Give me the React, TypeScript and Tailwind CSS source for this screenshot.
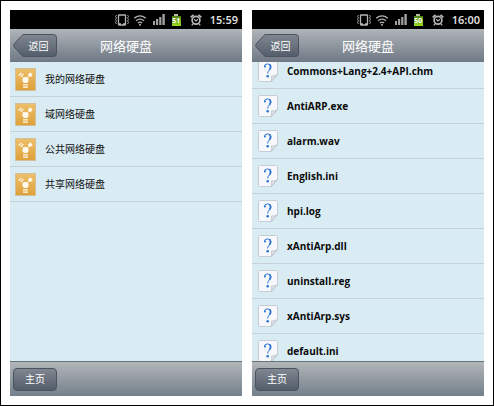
interface PhoneProps {
	readonly time: string
	readonly battery: string
	readonly children: React.ReactNode
}

const drives = ["我的网络硬盘", "域网络硬盘", "公共网络硬盘", "共享网络硬盘"]

const files = [
	"Commons+Lang+2.4+API.chm",
	"AntiARP.exe",
	"alarm.wav",
	"English.ini",
	"hpi.log",
	"xAntiArp.dll",
	"uninstall.reg",
	"xAntiArp.sys",
	"default.ini",
]

export default function App() {
	return (
		<main className="grid h-screen grid-cols-2 gap-[10px] border border-black bg-white p-[9px] font-['Noto_Sans','Noto_Sans_CJK_SC',sans-serif]">
			<Phone time="15:59" battery="51">
				<ul>
					{drives.map((name) => (
						<li
							key={name}
							className="flex h-[35px] items-center gap-[9px] border-b border-[#c5d0d8] pl-[5px] text-[10px] leading-4 text-[#111]"
						>
							<DriveIcon />
							{name}
						</li>
					))}
				</ul>
			</Phone>
			<Phone time="16:00" battery="50">
				<ul className="-mt-2">
					{files.map((name) => (
						<li
							key={name}
							className="flex h-[35px] items-center gap-[9px] border-b border-[#c5d0d8] pl-[6px] font-['Open_Sans',sans-serif] text-[10px] leading-4 font-bold text-[#0a0a0a]"
						>
							<FileIcon />
							{name}
						</li>
					))}
				</ul>
			</Phone>
		</main>
	)
}

function Phone({ time, battery, children }: PhoneProps) {
	return (
		<section className="flex min-h-0 min-w-0 flex-col bg-[#d9ecf4]">
			<StatusBar time={time} battery={battery} />
			<header className="grid h-[33px] shrink-0 grid-cols-[1fr_auto_1fr] items-center bg-linear-to-b from-[#b0b5b9] to-[#6f7985] px-[3px]">
				<BackButton />
				<h1 className="text-[13px] leading-5 text-white">网络硬盘</h1>
			</header>
			<div className="min-h-0 flex-1 overflow-hidden">{children}</div>
			<footer className="flex h-[35px] shrink-0 items-center border-t border-[#64727a] bg-linear-to-b from-[#b2b6b9] to-[#74808b] px-[3px]">
				<button
					type="button"
					className="h-[23px] w-11 rounded-[4px] border border-[#4a535e] bg-linear-to-b from-[#808791] to-[#535d6a] text-[10px] leading-4 text-white"
				>
					主页
				</button>
			</footer>
		</section>
	)
}

function BackButton() {
	return (
		<button
			type="button"
			className="relative h-[23px] w-11 pl-[7px] text-[10px] leading-4 text-white"
		>
			<svg viewBox="0 0 44 23" className="absolute inset-0 size-full" aria-hidden>
				<defs>
					<linearGradient id="back" x1="0" y1="0" x2="0" y2="1">
						<stop offset="0" stopColor="#808791" />
						<stop offset="1" stopColor="#535d6a" />
					</linearGradient>
				</defs>
				<path
					d="M11 .5H40.5a3 3 0 0 1 3 3v16a3 3 0 0 1-3 3H11q-1.500 0-2.500-1.400L1.200 13q-1-1.500 0-3L8.500 1.900Q9.500.5 11 .5Z"
					fill="url(#back)"
					stroke="#4a535e"
				/>
			</svg>
			<span className="relative">返回</span>
		</button>
	)
}

function StatusBar({ time, battery }: { readonly time: string; readonly battery: string }) {
	return (
		<div className="flex h-[19px] shrink-0 items-center justify-end bg-black pr-1 text-[#b5b5b5]">
			{/* vibrate */}
			<svg viewBox="0 0 16 14" className="mr-1 h-[14px] w-4" fill="none" stroke="currentColor" aria-hidden>
				<rect x="4.500" y="2" width="7" height="10" rx=".5" strokeWidth="1.300" />
				<path d="M5 11.200h2M9 11.200h2" strokeWidth="1.800" />
				<path d="M2.500 2l-1 1.500 1 1.500-1 1.500 1 1.500-1 1.500 1 1.500M13.500 2l1 1.500-1 1.500 1 1.500-1 1.500 1 1.500-1 1.500" strokeWidth=".9" />
			</svg>
			{/* wifi */}
			<svg viewBox="0 0 12 12" className="mr-[7px] size-3" fill="none" stroke="currentColor" strokeWidth="1.300" aria-hidden>
				<path d="M.3 4.200q5.700-4.800 11.400 0M2.100 6.700q3.900-3.200 7.800 0M3.900 9q2.100-1.700 4.200 0" />
				<circle cx="6" cy="10.700" r="1" fill="currentColor" stroke="none" />
			</svg>
			{/* signal */}
			<svg viewBox="0 0 12 11" className="mr-[7px] h-[11px] w-3" fill="#a2a2a2" aria-hidden>
				<path d="M0 7h2v4H0zM3 5h2.200v6H3zM6.200 3h2.200v8H6.200zM9.400 0h2.400v11H9.400z" />
			</svg>
			{/* battery */}
			<div className="mr-[9px] flex flex-col items-center">
				<div className="h-[2px] w-1 bg-[#b5c3a0]" />
				<div className="flex h-[10px] w-[9px] items-center justify-center bg-linear-to-b from-[#4d8110] to-[#9be01c] text-[7px] leading-[10px] font-bold text-white">
					{battery}
				</div>
			</div>
			{/* alarm */}
			<svg viewBox="0 0 12 12" className="mr-2 size-3" fill="none" stroke="currentColor" aria-hidden>
				<circle cx="6" cy="6.300" r="3.900" strokeWidth="1.700" />
				<path d="M.7 3.400L3.500.9M11.300 3.400L8.500.9" strokeWidth="1.800" />
				<path d="M4.200 5.200L6 6.900l2-1.700M3 9.800l-1.300 1.600M9 9.800l1.300 1.600" strokeWidth="1.200" />
			</svg>
			<span className="text-[11px] leading-4 font-semibold text-[#dedede]">{time}</span>
		</div>
	)
}

function DriveIcon() {
	return (
		<svg viewBox="0 0 21 23" className="h-[23px] w-[21px] shrink-0" aria-hidden>
			<defs>
				<linearGradient id="drive" x1="0" y1="0" x2="0" y2="1">
					<stop offset="0" stopColor="#edbf6b" />
					<stop offset="1" stopColor="#dea13a" />
				</linearGradient>
			</defs>
			<rect x=".5" y=".5" width="20" height="22" fill="url(#drive)" stroke="#d3c09a" />
			<g fill="#fffaf0">
				<circle cx="10.500" cy="12" r="3.100" />
				<path d="M15.200 4.300l2.500 2.500-2.400 2.500-2.500-2.300zM8 16.300h5v1.200H8zM8 18.500h5v1.200H8z" />
			</g>
			<path d="M10.500 12l4-4.500M10.500 12L7.500 8.800" fill="none" stroke="#fffaf0" strokeWidth=".9" />
			<path d="M3.700 7.600l2.700-2.800M5.700 8.800l2.700-2.800" fill="none" stroke="#fffaf0" strokeWidth="1.200" />
		</svg>
	)
}

function FileIcon() {
	return (
		<svg viewBox="0 0 20 22" className="h-[22px] w-5 shrink-0" aria-hidden>
			<path d="M1.500.5h17a1 1 0 0 1 1 1v13l-6 7h-12a1 1 0 0 1-1-1v-19a1 1 0 0 1 1-1Z" fill="#f6f8fb" stroke="#c6cdd4" />
			<path d="M13 21.500q1.200-2.500.5-5.500 3 .5 6-1.500Z" fill="#dfe3e8" stroke="#b9c0c8" strokeWidth=".8" />
			<path
				d="M6.500 6.800Q6.300 3.900 9.500 3.900q3.400 0 3.400 3 0 1.700-1.500 3-1.700 1.500-1.700 3.600"
				fill="none"
				stroke="#2b74d0"
				strokeWidth="1"
			/>
			<path d="M11.700 4.600q1.900 2.300-.2 5.200" fill="none" stroke="#2b74d0" strokeWidth="1.600" />
			<circle cx="6.900" cy="6.500" r="1" fill="#2b74d0" />
			<circle cx="9.700" cy="16.300" r="1.300" fill="#2b74d0" />
		</svg>
	)
}
